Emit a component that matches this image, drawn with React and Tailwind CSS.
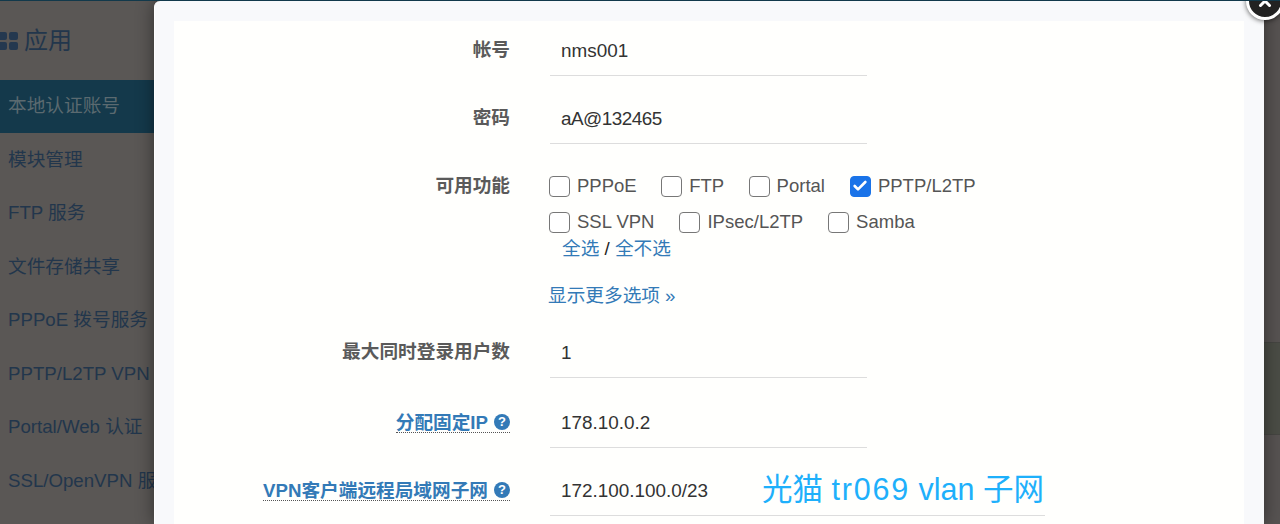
import React from 'react';
import { Check, X } from 'lucide-react';

const sideItems = ['本地认证账号', '模块管理', 'FTP 服务', '文件存储共享', 'PPPoE 拨号服务', 'PPTP/L2TP VPN', 'Portal/Web 认证', 'SSL/OpenVPN 服务'];

const font = { fontFamily: '"Liberation Sans", "Noto Sans CJK SC", sans-serif' };

function Field({ label, value, children, hint, wide, valueClass }) {
  return (
    <div className="flex items-start">
      <div className="w-[336px] shrink-0 flex justify-end pt-[2px]">
        {hint ? (
          <span className="flex items-start gap-[6px] border-b border-dotted border-[#555] text-[#337ab7] font-bold text-[18.67px] leading-[26px] h-[23px] whitespace-nowrap">
            {label}
            <HelpDot />
          </span>
        ) : (
          <span className="text-[#5a5a5a] font-bold text-[18.67px] leading-[24px] whitespace-nowrap">{label}</span>
        )}
      </div>
      <div className={`ml-[40px] h-[40px] border-b border-[#ddd] pl-[11px] pt-[3px] flex items-start ${wide ? 'w-[495px]' : 'w-[317px]'}`}>
        <span className={`text-[#333] text-[18.9px] leading-[24px] ${valueClass || ''}`}>{value}</span>
        {children}
      </div>
    </div>
  );
}

function HelpDot() {
  return (
    <span className="mt-[4px] w-[16px] h-[16px] rounded-full bg-[#337ab7] text-white text-[13px] leading-[16px] font-bold text-center">?</span>
  );
}

function Box({ label, checked, className }) {
  return (
    <label className={`flex items-center gap-[7px] text-[#555] text-[18.5px] leading-[24px] ${className || ''}`}>
      <span className={`w-[21px] h-[21px] rounded-[4px] flex items-center justify-center border-[1.5px] ${checked ? 'bg-[#1a73e8] border-[#1a73e8]' : 'bg-white border-[#777]'}`}>
        {checked && <Check size={16} strokeWidth={4} className="text-white" />}
      </span>
      {label}
    </label>
  );
}

export default function App() {
  return (
    <div className="relative h-[524px] overflow-hidden flex bg-[#575352] border-t border-[#12394b]">
      <div className="contents" style={font}>
        {/* Dimmed sidebar */}
        <aside className="w-[154px] shrink-0 text-[#22364c] bg-[#5a5755]">
          <div className="h-[78.5px] flex items-center gap-[6px] pt-[2px] text-[24px] -ml-[2px]">
            <svg width="20" height="18" viewBox="0 0 20 18" fill="#24384f">
              <rect x="0" y="0" width="9" height="8" rx="2" />
              <rect x="11" y="0" width="9" height="8" rx="2" />
              <rect x="0" y="10" width="9" height="8" rx="2" />
              <rect x="11" y="10" width="9" height="8" rx="2" />
            </svg>
            应用
          </div>
          <ul className="text-[18.67px]">
            {sideItems.map((item, i) => (
              <li key={item} className={`h-[53.5px] pl-[8px] flex items-center whitespace-nowrap overflow-hidden ${i === 0 ? 'bg-[#14394b] text-[#5b6a70]' : ''}`}>
                {item}
              </li>
            ))}
          </ul>
        </aside>

        {/* Modal */}
        <main className="relative w-[1110px] shrink-0 rounded-tl-[6px] bg-[#f8f9fb] border-l border-white pt-[20px] pl-[19px] pr-[20px] overflow-hidden shadow-[0_0_18px_rgba(0,0,0,0.45)]">
          <div className="bg-[#fffffd] h-[520px] pt-[15px]">
            <Field label="帐号" value="nms001" />
            <div className="h-[28px]" />
            <Field label="密码" value="aA@132465" valueClass="tracking-[-0.5px]" />
            <div className="h-[28px]" />
            <div className="flex items-start">
              <div className="w-[336px] shrink-0 flex justify-end pt-[2px]">
                <span className="text-[#5a5a5a] font-bold text-[18.67px] leading-[24px]">可用功能</span>
              </div>
              <div className="ml-[39px]">
                <div className="flex h-[24px] mt-[2px] mb-[12px]">
                  <Box label="PPPoE" className="mr-[24.5px]" />
                  <Box label="FTP" className="mr-[24.5px]" />
                  <Box label="Portal" className="mr-[25px]" />
                  <Box label="PPTP/L2TP" checked />
                </div>
                <div className="flex h-[24px]">
                  <Box label="SSL VPN" className="mr-[25px]" />
                  <Box label="IPsec/L2TP" className="mr-[25px]" />
                  <Box label="Samba" />
                </div>
                <div className="pl-[13px] text-[18.67px] leading-[26px] text-[#222] mt-[2px]">
                  <span className="text-[#337ab7]">全选</span> / <span className="text-[#337ab7]">全不选</span>
                </div>
                <div className="-ml-[1px] text-[18.67px] leading-[26px] text-[#337ab7] mt-[21px]">显示更多选项 »</div>
              </div>
            </div>
            <div className="h-[29px]" />
            <Field label="最大同时登录用户数" value="1" />
            <div className="h-[30px]" />
            <Field label="分配固定IP" value="178.10.0.2" hint />
            <div className="h-[28px]" />
            <Field label="VPN客户端远程局域网子网" value="172.100.100.0/23" hint wide>
              <span className="ml-[54px] -mt-[10px] text-[#1eb0fb] text-[30.5px] leading-[40px] whitespace-nowrap">
                光猫 <span className="tracking-[1.8px]">tr069</span> vlan 子网
              </span>
            </Field>
          </div>
        </main>

        {/* Page behind the overlay, right of the modal */}
        <div className="flex-1 flex flex-col">
          <div className="h-[341px]" />
          <div className="h-[93px] bg-[#4b4d46] border-y border-[#464642]" />
        </div>

        {/* Close button */}
        <button className="absolute -top-[19px] right-[-4px] w-[38px] h-[38px] rounded-full bg-[#222] border-[3px] border-white shadow-[0_1px_5px_rgba(0,0,0,0.6)] flex items-center justify-center">
          <X size={18} strokeWidth={4} className="text-white" />
        </button>
      </div>
    </div>
  );
}
